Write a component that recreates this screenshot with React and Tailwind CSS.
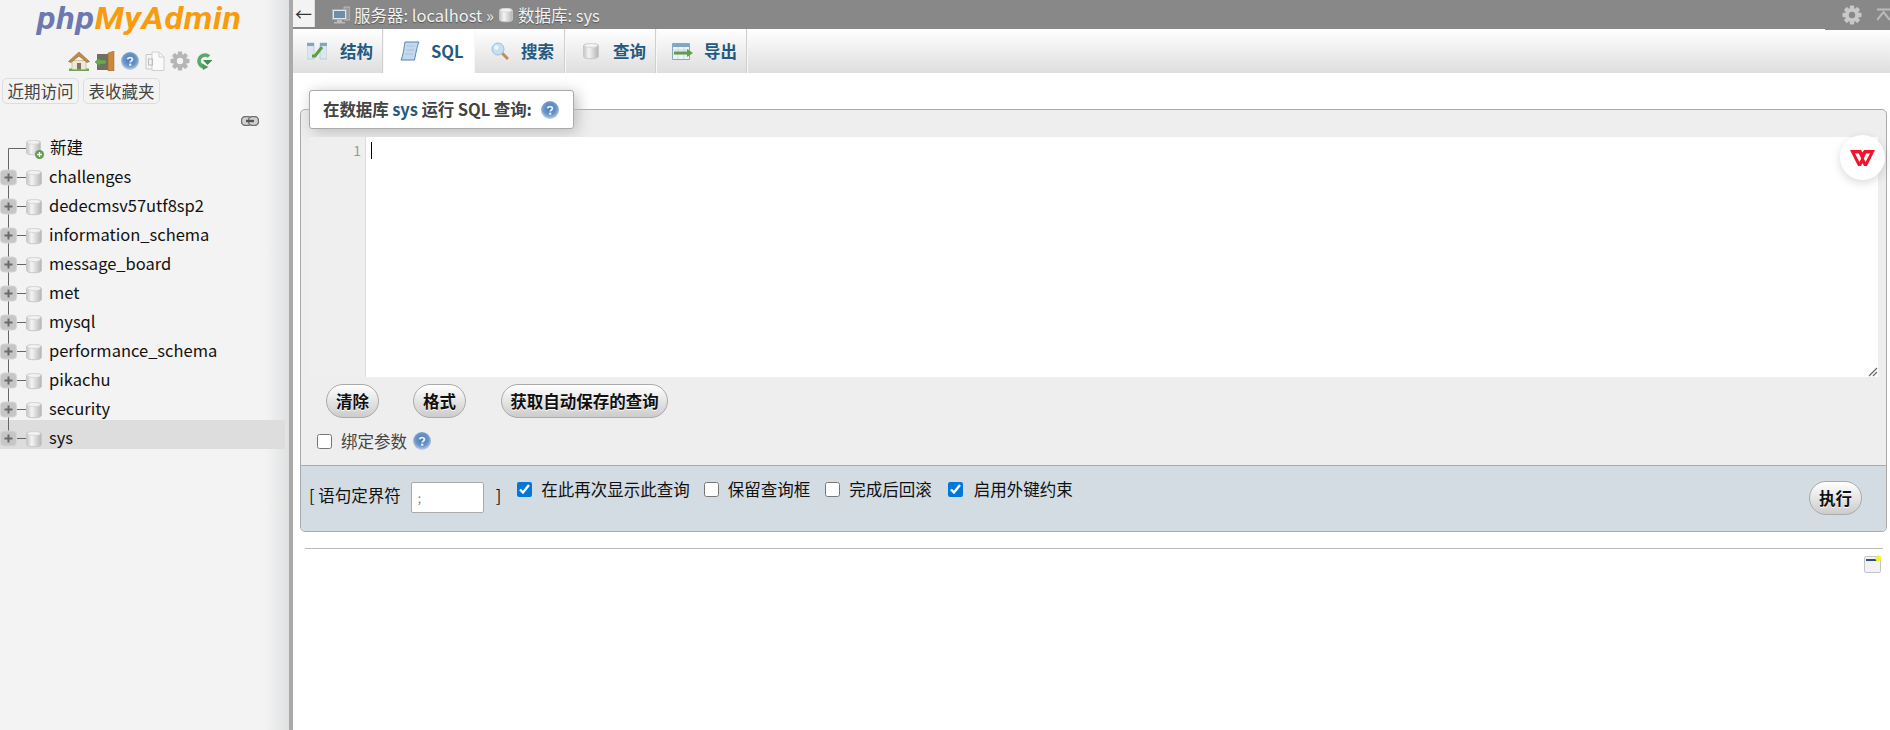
import { useId } from 'react';

const databases = [
  'challenges',
  'dedecmsv57utf8sp2',
  'information_schema',
  'message_board',
  'met',
  'mysql',
  'performance_schema',
  'pikachu',
  'security',
  'sys',
];

function DbIcon({ className = 'w-[16px] h-[18px]' }) {
  const id = useId();
  return (
    <svg viewBox="0 0 16 18" className={className}>
      <defs>
        <linearGradient id={id} x1="0" x2="1" y1="0" y2="0">
          <stop offset="0" stopColor="#c4c4c4" />
          <stop offset="0.35" stopColor="#f4f4f4" />
          <stop offset="1" stopColor="#b4b4b4" />
        </linearGradient>
      </defs>
      <path d="M0.5 3.5C0.5 1 15.5 1 15.5 3.5V14.5C15.5 17.5 0.5 17.5 0.5 14.5Z" fill={`url(#${id})`} stroke="#c8c8c8" />
      <ellipse cx="8" cy="3.5" rx="6.5" ry="2" fill="#f2f2f2" stroke="#d8d8d8" />
    </svg>
  );
}

function HelpIcon({ className = 'w-[18px] h-[18px]' }) {
  const id = useId();
  return (
    <svg viewBox="0 0 18 18" className={className}>
      <defs>
        <radialGradient id={id} cx="0.5" cy="0.42" r="0.58">
          <stop offset="0" stopColor="#3f76bb" />
          <stop offset="0.65" stopColor="#6f98c8" />
          <stop offset="1" stopColor="#c3d4e8" />
        </radialGradient>
      </defs>
      <circle cx="9" cy="9" r="9" fill={`url(#${id})`} />
      <path d="M6.6 7.4C6.8 5 11.4 5 11.4 7.4C11.4 9 9.2 9 9.2 10.6" fill="none" stroke="#e8eef6" strokeWidth="1.9" />
      <rect x="8.1" y="11.6" width="2.2" height="2.2" fill="#e8eef6" />
    </svg>
  );
}

function GearIcon({ className = 'w-[20px] h-[20px]', color = '#b5b5b5', hole = '#f3f3f3' }) {
  return (
    <svg viewBox="0 0 20 20" className={className}>
      <g fill={color}>
        {[0, 45, 90, 135].map((a) => (
          <rect key={a} x="7.8" y="0.5" width="4.4" height="19" rx="1" transform={`rotate(${a} 10 10)`} />
        ))}
        <circle cx="10" cy="10" r="7" />
      </g>
      <circle cx="10" cy="10" r="3.2" fill={hole} />
    </svg>
  );
}

function HomeIcon() {
  return (
    <svg viewBox="0 0 22 20" className="w-[22px] h-[20px]">
      <path d="M1 17.5H21V20H1Z" fill="#6aa655" />
      <path d="M4 9.5H18V18.5H4Z" fill="#efe7d5" stroke="#b8a98c" strokeWidth="0.6" />
      <path d="M9 12H13V18.5H9Z" fill="#7d7466" />
      <path d="M0.5 10.5L11 1L21.5 10.5L19 11.5L11 5L3 11.5Z" fill="#c08a4a" stroke="#96682f" strokeWidth="0.6" />
    </svg>
  );
}

function ExitIcon() {
  return (
    <svg viewBox="0 0 20 20" className="w-[20px] h-[20px]">
      <path d="M2 3H13V19H2Z" fill="#6f6f64" />
      <path d="M13 2L19 0V20H13Z" fill="#c9873f" stroke="#9d6528" strokeWidth="0.5" />
      <path d="M0 11L5 6.5V9H11V13H5V15.5Z" fill="#6ba94d" stroke="#4d8434" strokeWidth="0.5" />
    </svg>
  );
}

function DocsIcon() {
  return (
    <svg viewBox="0 0 20 20" className="w-[20px] h-[20px]">
      <path d="M1 3.5H10V18H1Z" fill="#f4f4f4" stroke="#c8c8c8" />
      <path d="M7 1H14L19 6V19.5H7Z" fill="#fafafa" stroke="#cfcfcf" />
      <path d="M14 1V6H19" fill="none" stroke="#cfcfcf" />
      <rect x="3.5" y="8" width="4" height="6" fill="none" stroke="#bbb" />
    </svg>
  );
}

function ReloadIcon() {
  return (
    <svg viewBox="0 0 16 18" className="w-[16px] h-[18px]">
      <path d="M13 4.5A6 6 0 1 0 9 15" fill="none" stroke="#5aa96a" strokeWidth="3.6" />
      <path d="M7 8H16L16 8.5L11.5 13Z" fill="#3f8f50" />
      <path d="M6 11.5L12.5 15L7 18Z" fill="#4a9a5b" />
    </svg>
  );
}

function LinkIcon() {
  return (
    <svg viewBox="0 0 18 10" className="w-[18px] h-[10px]">
      <rect x="0.5" y="0.5" width="10" height="9" rx="4" fill="#d0d0d0" stroke="#6f6f6f" strokeWidth="1.4" />
      <rect x="7.5" y="0.5" width="10" height="9" rx="4" fill="#d0d0d0" stroke="#6f6f6f" strokeWidth="1.4" />
      <rect x="5" y="3.8" width="8" height="2.4" fill="#555" />
    </svg>
  );
}

function NewDbIcon() {
  return (
    <span className="relative block w-[18px] h-[20px]">
      <DbIcon className="w-[15px] h-[17px]" />
      <svg viewBox="0 0 9 9" className="absolute right-0 bottom-0 w-[9px] h-[9px]">
        <circle cx="4.5" cy="4.5" r="4.5" fill="#5e9e4b" />
        <path d="M4.5 2V7M2 4.5H7" stroke="#fff" strokeWidth="1.4" />
      </svg>
    </span>
  );
}

// tree connector for one navigation row
function TreeLines({ first, last }) {
  if (first) {
    return (
      <svg viewBox="0 0 26 29" className="w-[26px] h-[29px] shrink-0">
        <path d="M8.5 14.5H26M8.5 14.5V29" stroke="#666" fill="none" />
      </svg>
    );
  }
  return (
    <svg viewBox="0 0 26 29" className="w-[26px] h-[29px] shrink-0">
      <path d={last ? 'M8.5 0V14.5' : 'M8.5 0V29'} stroke="#666" fill="none" />
      <path d="M17 14.5H26" stroke="#666" fill="none" />
      <rect x="0.5" y="7" width="16" height="15" rx="3.5" fill="#c6c6c6" stroke="#d6d6d6" />
      <path d="M4.5 14.5H12.5M8.5 10.5V18.5" stroke="#6a6a6a" strokeWidth="2" />
    </svg>
  );
}

function Sidebar() {
  return (
    <aside className="w-[293px] h-full shrink-0 flex flex-col border-r-[4px] border-[#aaaaaa] bg-gradient-to-r from-[#f3f3f3] from-[92%] to-[#dfe1e2] to-[100%]">
      <div className="h-[44px] pl-[37px]">
        <div className="origin-left scale-x-[1.1] text-[31px] leading-[37px] font-bold italic tracking-[0.6px] font-['Roboto',sans-serif]">
          <span className="text-[#6c78af]">php</span>
          <span className="text-[#f89c0e]">MyAdmin</span>
        </div>
      </div>
      <div className="flex items-center h-[24px] mt-[5px] pl-[68px]">
        <HomeIcon />
        <span className="ml-[5px]"><ExitIcon /></span>
        <span className="ml-[6px]"><HelpIcon className="w-[18px] h-[18px]" /></span>
        <span className="ml-[6px]"><DocsIcon /></span>
        <span className="ml-[5px]"><GearIcon className="w-[20px] h-[20px]" /></span>
        <span className="ml-[6px]"><ReloadIcon /></span>
      </div>
      <div className="flex gap-[4px] mt-[5px] pl-[2px]">
        {['近期访问', '表收藏夹'].map((label) => (
          <div key={label} className="w-[77px] h-[26px] flex items-center justify-center rounded-[5px] border border-[#dddddd] bg-[#f3f3f3] text-[16.5px] text-[#444444]">
            {label}
          </div>
        ))}
      </div>
      <div className="flex justify-start pl-[241px] mt-[12px] h-[10px]">
        <LinkIcon />
      </div>
      <ul className="mt-[4px] w-[285px] text-[16.5px] text-[#111111]">
        <li className="h-[29px]">
          <div className="flex items-center h-[29px] translate-y-[4px]">
            <TreeLines first />
            <NewDbIcon />
            <span className="ml-[6px] -translate-y-[1px]">新建</span>
          </div>
        </li>
        {databases.map((name, i) => (
          <li key={name} className={`h-[29px] ${name === 'sys' ? 'bg-[#dddddd]' : ''}`}>
            <div className="flex items-center h-[29px] translate-y-[4px]">
              <TreeLines last={i === databases.length - 1} />
              <DbIcon />
              <span className="ml-[7px] -translate-y-[1px]">{name}</span>
            </div>
          </li>
        ))}
      </ul>
    </aside>
  );
}

function StructureIcon() {
  return (
    <svg viewBox="0 0 20 20" className="w-[20px] h-[20px]">
      <path d="M0 2H7V18H0ZM13 2H20V18H13Z" fill="#dbe6ee" stroke="#a9c0d1" strokeWidth="0.6" />
      <path d="M0 2H7V5H0ZM13 2H20V5H13Z" fill="#7fa6c4" />
      <path d="M5 15L8 15L15 6" fill="none" stroke="#5a9e45" strokeWidth="3" />
    </svg>
  );
}

function SqlIcon() {
  return (
    <svg viewBox="0 0 20 20" className="w-[20px] h-[20px]">
      <path d="M5 1H19C17 5 16 12 14.5 19H1C3 15 4 7 5 1Z" fill="#c2d8ec" stroke="#4f86b6" />
      <path d="M7 5H15M6.4 9H14.2M5.6 13H13" stroke="#a6c4de" />
    </svg>
  );
}

function SearchIcon() {
  return (
    <svg viewBox="0 0 18 18" className="w-[18px] h-[18px]">
      <path d="M11 11L17 17" stroke="#c98a4e" strokeWidth="3" />
      <circle cx="7" cy="7" r="6" fill="#c8dff2" stroke="#9dc0dc" />
      <circle cx="5.5" cy="5.5" r="2.2" fill="#eef6fc" />
    </svg>
  );
}

function ExportIcon() {
  return (
    <svg viewBox="0 0 21 17" className="w-[21px] h-[17px]">
      <path d="M0.5 0.5H17.5V16.5H0.5Z" fill="#eef3f6" stroke="#8ba7bb" />
      <path d="M1 1H17V4H1Z" fill="#7fa6c4" />
      <path d="M1 7H17M1 11H17M6 4V16M12 4V16" stroke="#bcd0dc" strokeWidth="0.7" />
      <path d="M2 8.5H15V6L21 10L15 14V11.5H2Z" fill="#5f9e4c" />
    </svg>
  );
}

const tabs = [
  { label: '结构', icon: <StructureIcon />, left: 14, gap: 13 },
  { label: 'SQL', icon: <SqlIcon />, left: 16, gap: 11 },
  { label: '搜索', icon: <SearchIcon />, left: 16, gap: 12 },
  { label: '查询', icon: <DbIcon className="w-[16px] h-[18px]" />, left: 17, gap: 14 },
  { label: '导出', icon: <ExportIcon />, left: 15, gap: 11 },
];

function TopBar() {
  return (
    <header className="h-[29px] flex items-center bg-[#888888] text-[16.5px] text-[#f1f1f1] [text-shadow:0_1px_1px_#555]">
      <div className="w-[22px] h-[27px] self-start bg-[#f3f3f3] border-r border-[#dddddd] flex items-center justify-center text-[#333333] text-[17px] leading-none [text-shadow:none]">
        ←
      </div>
      <svg viewBox="0 0 18 18" className="w-[18px] h-[18px] ml-[17px]">
        <path d="M12 1H18V14H12Z" fill="#999" stroke="#bbb" />
        <path d="M0.5 3.5H14.5V13.5H0.5Z" fill="#dfe7ee" stroke="#aaa" />
        <path d="M2 5H13V12H2Z" fill="#6d8ea8" />
        <path d="M5 14H10V16H13V17.5H2V16H5Z" fill="#bbb" />
      </svg>
      <span className="ml-[4px] translate-y-[1px]">服务器: localhost »</span>
      <span className="ml-[5px]"><DbIcon className="w-[14px] h-[16px]" /></span>
      <span className="ml-[5px] translate-y-[1px]">数据库: sys</span>
      <div className="ml-auto flex items-center">
        <GearIcon color="#c8c8c8" hole="#888888" className="w-[20px] h-[20px]" />
        <svg viewBox="0 0 13 14" className="w-[13px] h-[14px] ml-[15px]">
          <path d="M0 1.5H13M0 12L6.5 4L13 12" fill="none" stroke="#bbbbbb" strokeWidth="2" />
        </svg>
      </div>
    </header>
  );
}

function TabBar() {
  return (
    <nav className="relative h-[44px] flex bg-gradient-to-b from-white to-[#dedede]">
      {tabs.map((t) => (
        <div
          key={t.label}
          style={{ paddingLeft: t.left }}
          className={`w-[91px] h-full flex items-center border-r border-[#f8f8f8] text-[16.5px] font-bold text-[#235a81] ${t.label === 'SQL' ? 'bg-white' : 'shadow-[inset_-1px_0_0_#cfcfcf]'}`}
        >
          <span className="shrink-0">{t.icon}</span>
          <span style={{ marginLeft: t.gap }}>{t.label}</span>
        </div>
      ))}
      <div className="absolute top-0 right-0 w-[65px] h-[1px] bg-[#888888]" />
    </nav>
  );
}

function PillButton({ children, className = '' }) {
  return (
    <div className={`h-[34px] flex items-center justify-center rounded-[17px] border border-[#aaaaaa] bg-gradient-to-b from-white to-[#cccccc] text-[16.5px] font-bold text-[#111111] [text-shadow:0_1px_0_#fff] ${className}`}>
      {children}
    </div>
  );
}

function QueryBox() {
  return (
    <section className="relative ml-[7px] mr-[3px] mt-[36px] h-[423px] flex flex-col rounded-[5px] border border-[#aaaaaa] bg-[#eeeeee]">
      <div className="absolute left-[8px] top-[-20px] w-[265px] h-[39px] flex items-center pl-[13px] rounded-[3px] border border-[#aaaaaa] bg-white shadow-[3px_3px_15px_#bbbbbb] text-[16.5px] font-bold tracking-[-0.1px] text-[#444444]">
        <span>
          在数据库 <span className="text-[#235a81]">sys</span> 运行 SQL 查询:
        </span>
        <span className="ml-[9px]"><HelpIcon /></span>
      </div>

      <div className="relative mt-[27px] mx-[8px] h-[240px] flex bg-white">
        <div className="w-[57px] h-full bg-[#efefef] border-r border-[#dddddd] pr-[4px] pt-[4px] text-right text-[14px] leading-[18px] text-[#999999]">
          1
        </div>
        <div className="ml-[5px] mt-[5px] w-[1px] h-[17px] bg-black" />
        <svg viewBox="0 0 10 10" className="absolute right-0 bottom-0 w-[10px] h-[10px]">
          <path d="M1 9L9 1M5 9L9 5" stroke="#666" strokeWidth="1.2" />
        </svg>
      </div>

      <div className="flex mt-[7px] pl-[25px]">
        <PillButton className="w-[53px]">清除</PillButton>
        <PillButton className="w-[53px] ml-[34px]">格式</PillButton>
        <PillButton className="w-[167px] ml-[35px]">获取自动保存的查询</PillButton>
      </div>

      <label className="flex items-center mt-[11px] ml-[16px] h-[24px] text-[16.5px] text-[#444444]">
        <input type="checkbox" className="w-[15px] h-[15px]" />
        <span className="ml-[9px]">绑定参数</span>
        <span className="ml-[6px]"><HelpIcon /></span>
      </label>

      <div className="flex-1 mt-[12px] relative flex items-start rounded-b-[5px] border-t border-[#aaaaaa] bg-[#d3dce3] text-[16.5px] text-[#111111]">
        <span className="ml-[8px] mt-[17px]">[ 语句定界符</span>
        <div className="ml-[10px] mt-[16px] w-[73px] h-[31px] flex items-center rounded-[2px] border border-[#aaaaaa] bg-white pl-[6px] text-[12px] leading-none text-[#777777]">
          ;
        </div>
        <span className="ml-[12px] mt-[17px]">]</span>
        <Check label="在此再次显示此查询" checked className="ml-[16px]" />
        <Check label="保留查询框" className="ml-[14px]" />
        <Check label="完成后回滚" className="ml-[15px]" />
        <Check label="启用外键约束" checked className="ml-[16px] gap-[2px]" />
        <PillButton className="w-[53px] ml-auto mr-[24px] mt-[15px]">执行</PillButton>
      </div>
    </section>
  );
}

function Check({ label, checked, className = '' }) {
  return (
    <label className={`flex items-center mt-[11px] h-[24px] ${className}`}>
      <input type="checkbox" defaultChecked={checked} className="w-[15px] h-[15px] accent-[#0078d7]" />
      <span className="ml-[9px]">{label}</span>
    </label>
  );
}

function ConsoleIcon() {
  return (
    <svg viewBox="0 0 18 18" className="w-[18px] h-[18px]">
      <rect x="0.5" y="1.5" width="16" height="16" rx="1.5" fill="#f2f2f2" stroke="#c4c4c4" />
      <rect x="2" y="4" width="11" height="2" fill="#2d4e7d" />
      <circle cx="14.5" cy="3.5" r="3" fill="#f3ef3a" />
    </svg>
  );
}

export default function App() {
  return (
    <div className="w-[1890px] h-[730px] flex overflow-hidden bg-white font-['Noto_Sans_CJK_SC','Noto_Sans',sans-serif]">
      <Sidebar />
      <main className="flex-1 min-w-0 flex flex-col">
        <TopBar />
        <TabBar />
        <QueryBox />
        <hr className="mt-[16px] ml-[12px] mr-[7px] border-t border-[#bbbbbb]" />
        <div className="flex justify-end mt-[6px] pr-[8px]">
          <ConsoleIcon />
        </div>
      </main>
      {/* WPS floating button over the editor */}
      <div className="fixed left-[1840px] top-[135px] w-[45px] h-[45px] rounded-full bg-white shadow-[0_3px_10px_rgba(0,0,0,0.15)] flex items-center justify-center">
        <svg viewBox="0 0 25 16" className="w-[25px] h-[16px]">
          <path
            fillRule="evenodd"
            d="M0 0H11L12.5 2.5L14 0H25L17 16H14L12.5 13L11 16H8ZM5 3.5L9.5 12L11.2 8.5L8.8 3.5ZM20 3.5H16.2L13.8 8.5L15.5 12Z"
            fill="#f0142f"
          />
        </svg>
      </div>
    </div>
  );
}
